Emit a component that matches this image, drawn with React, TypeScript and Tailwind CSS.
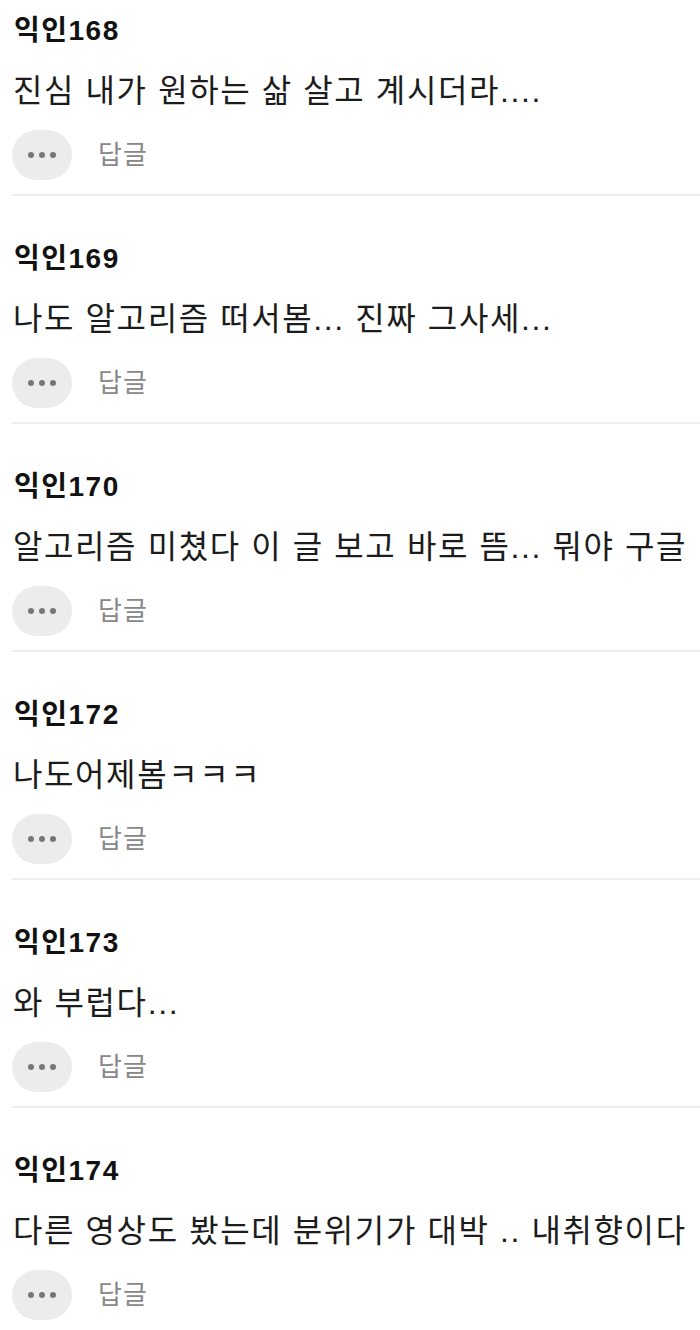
import React from "react";

const comments = [
  { name: "익인168", text: "진심 내가 원하는 삶 살고 계시더라...." },
  { name: "익인169", text: "나도 알고리즘 떠서봄... 진짜 그사세..." },
  { name: "익인170", text: "알고리즘 미쳤다 이 글 보고 바로 뜸... 뭐야 구글" },
  { name: "익인172", text: "나도어제봄ㅋㅋㅋ" },
  { name: "익인173", text: "와 부럽다..." },
  { name: "익인174", text: "다른 영상도 봤는데 분위기가 대박 .. 내취향이다" },
];

export default function App() {
  return (
    <div
      className="w-[700px] h-[1330px] overflow-hidden bg-white"
      style={{ fontFamily: '"Liberation Sans", "Noto Sans CJK KR", sans-serif' }}
    >
      {comments.map((c, i) => (
        <div
          key={c.name}
          className={`ml-3 border-b-2 border-[#eeeeee] ${i === 0 ? "pt-[13px]" : "pt-[45px]"}`}
        >
          <div className="h-[36px] leading-[36px] text-[28px] tracking-[1.5px] font-bold text-[#111111] pl-[2px] whitespace-nowrap">
            {c.name}
          </div>
          <div className="mt-[22px] h-[40px] leading-[40px] text-[32px] tracking-[1.6px] text-[#1c1c1c] pl-[1px] whitespace-nowrap">
            {c.text}
          </div>
          <div className="mt-[19px] mb-[14px] flex items-center">
            <div className="w-[60px] h-[50px] rounded-full bg-[#ececec] flex items-center justify-center gap-[5px]">
              <span className="w-[6px] h-[6px] rounded-full bg-[#777777]" />
              <span className="w-[6px] h-[6px] rounded-full bg-[#777777]" />
              <span className="w-[6px] h-[6px] rounded-full bg-[#777777]" />
            </div>
            <span className="ml-[26px] text-[26px] tracking-[1px] leading-[30px] text-[#888888]">답글</span>
          </div>
        </div>
      ))}
    </div>
  );
}
